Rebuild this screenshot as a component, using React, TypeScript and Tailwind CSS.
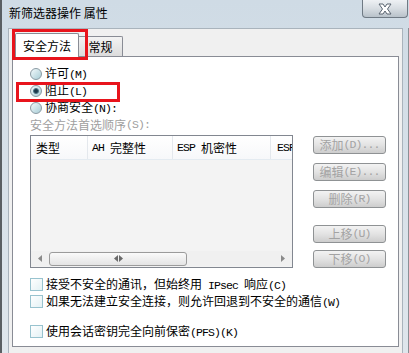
import React from "react";

function T({ s }: { s: string }) {
  const parts = s.match(/[\u0000-\u00ff]+|[^\u0000-\u00ff]+/g) || [];
  return (
    <>
      {parts.map((p, i) =>
        /^[\u0000-\u00ff]+$/.test(p) ? (
          <span key={i} className="font-['Liberation_Mono',monospace] text-[11.5px] tracking-[-0.9px] whitespace-pre">
            {p}
          </span>
        ) : (
          <span key={i}>{p}</span>
        )
      )}
    </>
  );
}

function Radio({ checked, label }: { checked?: boolean; label: string }) {
  return (
    <div className="h-[17px] flex items-center">
      <div className="w-[12px] h-[12px] rounded-full border border-[#8a9aa3] bg-gradient-to-br from-[#f3fafc] to-[#a8cdd6] flex items-center justify-center">
        {checked && <div className="w-[6px] h-[6px] rounded-full bg-[#1d3a4c] border border-[#4d7586]" />}
      </div>
      <span className="ml-[3px] text-[12px] leading-none text-black">
        <T s={label} />
      </span>
    </div>
  );
}

function Check({ label, className = "" }: { label: string; className?: string }) {
  return (
    <div className={"h-[17px] flex items-center " + className}>
      <div className="w-[13px] h-[13px] border border-[#98c3cf] bg-gradient-to-br from-[#ffffff] to-[#e3f1f4]" />
      <span className="ml-[3px] text-[12px] leading-none text-black">
        <T s={label} />
      </span>
    </div>
  );
}

function Btn({ label, className = "" }: { label: string; className?: string }) {
  return (
    <div
      className={
        "w-[73px] h-[18px] rounded-[3px] border border-[#8f9294] bg-gradient-to-b from-[#f3f3f3] via-[#e3e3e3] to-[#cdcdcd] flex items-center justify-center text-[12px] leading-none text-[#a3a3a3] " +
        className
      }
    >
      <T s={label} />
    </div>
  );
}

export default function App() {
  return (
    <div className="w-[409px] h-[353px] overflow-hidden relative flex flex-col bg-gradient-to-b from-[#cfdbe5] to-[#dfe6ec] font-['Noto_Sans_CJK_SC',sans-serif]">
      {/* title bar */}
      <div className="h-[28px] flex items-start justify-between border-l-[2px] border-[#5a5f63]">
        <span className="pl-[7px] pt-[7px] text-[12px] leading-none text-black">新筛选器操作 属性</span>
        <div className="mr-[1px] w-[46px] h-[18px] rounded-b-[4px] border border-t-0 border-[#6f7a84] bg-gradient-to-b from-[#eef1f4] via-[#d7dde2] to-[#b9c2ca] flex items-center justify-center">
          <svg width="16" height="12" viewBox="0 0 16 12">
            <path
              d="M2 1 L6 1 L8 4 L10 1 L14 1 L10.5 6 L14 11 L10 11 L8 8 L6 11 L2 11 L5.5 6 Z"
              fill="#ffffff"
              stroke="#5a6470"
              strokeWidth="1"
              strokeLinejoin="round"
            />
          </svg>
        </div>
      </div>

      {/* body */}
      <div className="flex-1 flex border-l-[2px] border-[#5a5f63]">
        <div className="w-[6px]" />
        <div className="flex-1 bg-[#f0f0f0] border-t border-l border-r border-[#a9b3bc] flex flex-col pl-[3px] pr-[3px]">
          {/* tabs */}
          <div className="h-[27px] flex items-end pl-[3px] relative z-10">
            <div className="h-[24px] w-[64px] bg-white border border-b-0 border-[#898c95] rounded-t-[2px] flex items-center justify-center text-[12px] leading-none text-black mb-[-1px] pt-[1px]">
              安全方法
            </div>
            <div className="h-[20px] w-[44px] bg-gradient-to-b from-[#f3f3f3] to-[#dcdcdc] border border-l-0 border-b-0 border-[#898c95] rounded-tr-[2px] flex items-center justify-center text-[12px] leading-none text-black">
              常规
            </div>
          </div>
          {/* panel */}
          <div className="w-[387px] flex-1 bg-white border border-[#898c95] flex flex-col pt-[8px] pl-[17px]">
            <Radio label="许可(M)" />
            <Radio checked label="阻止(L)" />
            <Radio label="协商安全(N):" />
            <div className="h-[17px] flex items-center text-[12px] leading-none text-[#a0a0a0]">
              <T s="安全方法首选顺序(S):" />
            </div>
            <div className="flex mt-[2px]">
              {/* list */}
              <div className="w-[263px] h-[133px] border border-[#828790] bg-[#f3f3f3] flex flex-col">
                <div className="h-[24px] bg-gradient-to-b from-[#ffffff] to-[#f7f8fa] border-b border-[#e4ebf1] flex text-[12px] leading-none text-black overflow-hidden">
                  <div className="w-[57px] shrink-0 border-r border-[#e4e8ed] flex items-center pl-[5px]">类型</div>
                  <div className="w-[85px] shrink-0 border-r border-[#e4e8ed] flex items-center pl-[4px]">
                    <T s="AH 完整性" />
                  </div>
                  <div className="w-[98px] shrink-0 border-r border-[#e4e8ed] flex items-center pl-[4px]">
                    <T s="ESP 机密性" />
                  </div>
                  <div className="w-[40px] shrink-0 flex items-center pl-[6px]">
                    <T s="ESP" />
                  </div>
                </div>
                <div className="flex-1" />
                <div className="h-[15px] mb-[1px] flex items-center bg-[#f0f0f0]">
                  <div className="w-[18px] flex justify-center">
                    <svg width="4" height="7" viewBox="0 0 4 7">
                      <path d="M4 0 L0 3.5 L4 7 Z" fill="#8a8a8a" />
                    </svg>
                  </div>
                  <div className="w-[138px] h-[14px] rounded-[3px] border border-[#9b9b9b] bg-gradient-to-b from-[#fafafa] to-[#e4e4e4] flex items-center justify-center gap-[1px]">
                    <svg width="4" height="7" viewBox="0 0 4 7">
                      <path d="M4 0 L0 3.5 L4 7 Z" fill="#6a6a6a" />
                    </svg>
                    <svg width="4" height="7" viewBox="0 0 4 7">
                      <path d="M0 0 L4 3.5 L0 7 Z" fill="#6a6a6a" />
                    </svg>
                  </div>
                  <div className="flex-1" />
                  <div className="w-[18px] flex justify-center">
                    <svg width="4" height="7" viewBox="0 0 4 7">
                      <path d="M0 0 L4 3.5 L0 7 Z" fill="#8a8a8a" />
                    </svg>
                  </div>
                </div>
              </div>
              {/* buttons */}
              <div className="ml-[20px] flex flex-col pt-[1px]">
                <Btn label="添加(D)..." />
                <Btn label="编辑(E)..." className="mt-[9px]" />
                <Btn label="删除(R)" className="mt-[9px]" />
                <Btn label="上移(U)" className="mt-[17px]" />
                <Btn label="下移(O)" className="mt-[7px]" />
              </div>
            </div>
            <Check label="接受不安全的通讯，但始终用 IPsec 响应(C)" className="mt-[8px]" />
            <Check label="如果无法建立安全连接，则允许回退到不安全的通信(W)" />
            <Check label="使用会话密钥完全向前保密(PFS)(K)" className="mt-[13px]" />
          </div>
          <div className="h-[6px]" />
        </div>
        <div className="w-[6px] border-r border-[#8a9096]" />
      </div>

      {/* annotations */}
      <div className="absolute left-[12px] top-[29px] w-[76px] h-[31px] border-[3px] border-[#e8141c] z-20" />
      <div className="absolute left-[16px] top-[82px] w-[104px] h-[20px] border-[3px] border-[#e8141c] z-20" />
    </div>
  );
}
